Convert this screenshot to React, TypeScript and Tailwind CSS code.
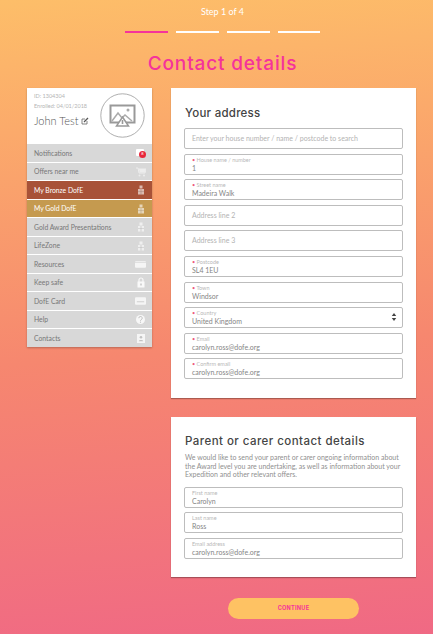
import React from "react";

const body = "font-['Lato','Liberation_Sans',sans-serif]";
const head = "font-['Inter','Liberation_Sans',sans-serif]";

function Glyph({ kind }: { kind: string }) {
  const c = "white";
  const common = { width: 10, height: 10, viewBox: "0 0 10 10" } as const;
  if (kind === "note")
    return (
      <span className="relative block h-[10px] w-[10px]">
        <svg {...common}><rect x="0" y="1" width="8" height="7" rx="1" fill={c} /></svg>
        <span className="absolute left-[3px] top-[2.500px] flex h-[7px] w-[7px] items-center justify-center rounded-full bg-[#e8263a] text-[4px] leading-none text-white">8</span>
      </span>
    );
  if (kind === "cart")
    return (
      <svg {...common} opacity="0.55">
        <path d="M0 1h2l1 5h6l1-4H2.500" fill="none" stroke={c} strokeWidth="1" />
        <path d="M3 2h6.500l-.8 3.500H3.600z" fill={c} />
        <circle cx="3.500" cy="8.500" r="1" fill={c} /><circle cx="8" cy="8.500" r="1" fill={c} />
      </svg>
    );
  if (kind === "award")
    return (
      <svg {...common} opacity="0.6">
        <rect x="3.500" y="0.500" width="3" height="3" fill={c} />
        <rect x="2" y="4" width="6" height="5.500" fill={c} />
        <rect x="4.500" y="4" width="1" height="5.500" fill="#999" opacity="0.5" />
        <rect x="2" y="6" width="6" height="0.8" fill="#999" opacity="0.5" />
      </svg>
    );
  if (kind === "card")
    return (
      <svg width="11" height="10" viewBox="0 0 12 10" opacity="0.75">
        <rect x="0" y="2" width="12" height="7" rx="1" fill={c} />
        <rect x="0" y="3" width="12" height="0.6" fill="#ccc" />
      </svg>
    );
  if (kind === "id")
    return (
      <svg width="11" height="10" viewBox="0 0 12 10" opacity="0.75">
        <rect x="0" y="1" width="12" height="8" rx="1" fill={c} />
        <rect x="2" y="5.500" width="8" height="0.8" fill="#bbb" />
      </svg>
    );
  if (kind === "lock")
    return (
      <svg width="10" height="11" viewBox="0 0 10 11" opacity="0.85">
        <path d="M3 5V3a2 2 0 0 1 4 0v2" fill="none" stroke={c} strokeWidth="1.200" />
        <rect x="1.500" y="4.500" width="7" height="6" fill={c} />
        <rect x="4.500" y="6.500" width="1" height="2" fill="#aaa" />
      </svg>
    );
  if (kind === "help")
    return (
      <svg width="11" height="11" viewBox="0 0 11 11" opacity="0.8">
        <circle cx="5.500" cy="5.500" r="4.500" fill={c} />
        <path d="M3.800 4.200a1.700 1.700 0 1 1 2.400 1.500c-.5.3-.7.5-.7 1.100" fill="none" stroke="#bbb" strokeWidth="1" />
        <circle cx="5.500" cy="8.200" r=".6" fill="#bbb" />
      </svg>
    );
  return (
    <svg width="10" height="11" viewBox="0 0 10 11" opacity="0.75">
      <rect x="1" y="1" width="8" height="9" fill={c} />
      <circle cx="5" cy="4.300" r="1.300" fill="#bbb" />
      <path d="M2.800 8.200c0-1.600 4.400-1.600 4.400 0z" fill="#bbb" />
    </svg>
  );
}

const menu = [
  { t: "Notifications", i: "note", h: "h-[18px]" },
  { t: "Offers near me", i: "cart", h: "h-[17px]" },
  { t: "My Bronze DofE", i: "award", h: "h-[18px]", bg: "bg-[#a85238]" },
  { t: "My Gold DofE", i: "award", h: "h-[17px]", bg: "bg-[#c59a4f]" },
  { t: "Gold Award Presentations", i: "award", h: "h-[18px]" },
  { t: "LifeZone", i: "award", h: "h-[17px]" },
  { t: "Resources", i: "card", h: "h-[18px]" },
  { t: "Keep safe", i: "lock", h: "h-[17px]" },
  { t: "DofE Card", i: "id", h: "h-[18px]" },
  { t: "Help", i: "help", h: "h-[17px]" },
  { t: "Contacts", i: "contact", h: "h-[18px]" },
];

function Field({ label, value, req, ph }: { label?: string; value?: string; req?: boolean; ph?: string }) {
  return (
    <div className={`flex h-[21px] flex-col justify-center rounded-[2px] border border-[#bdbdbd] bg-white px-[7px] ${body}`}>
      {ph ? (
        <span className="text-[7px] leading-none text-[#b3b3b3]">{ph}</span>
      ) : (
        <>
          <span className="text-[5.500px] leading-[7px] text-[#b8b8b8]">
            {req && <span className="text-[#ee5a7c]">• </span>}
            {label}
          </span>
          <span className="text-[7px] leading-[8px] text-[#858585]">{value}</span>
        </>
      )}
    </div>
  );
}

export default function App() {
  return (
    <div className={`h-[634px] w-[433px] overflow-hidden bg-[linear-gradient(176deg,#fdbe69_0%,#fbaa6b_20%,#f6876f_55%,#f06984_100%)] ${body}`}>
      <div className="flex w-[445px] flex-col items-center pt-[5px]">
        <div className="text-[9px] leading-[13px] text-white">Step 1 of 4</div>
        <div className="mt-[13px] flex gap-[8px]">
          <div className="h-[2px] w-[43px] bg-[#f5339b]" />
          <div className="h-[2px] w-[43px] bg-white" />
          <div className="h-[2px] w-[43px] bg-white" />
          <div className="h-[2px] w-[42px] bg-white" />
        </div>
        <h1 className={`mt-[19px] text-[19px] font-medium leading-[24px] tracking-[0.85px] text-[#f5339b] ${head}`}>Contact details</h1>
      </div>

      <div className="mt-[12px] flex items-start gap-[19px] pl-[27px]">
        <aside className="w-[125px] bg-white shadow-[0_1px_2px_rgba(0,0,0,0.25)]">
          <div className="flex h-[56px] justify-between pl-[7px] pr-[7px] pt-[4px]">
            <div>
              <div className="text-[5.500px] leading-[9px] text-[#b5b5b5]">ID: 1304304</div>
              <div className="text-[5.500px] leading-[10px] text-[#b5b5b5]">Enrolled: 04/01/2018</div>
              <div className="mt-[3px] flex items-center gap-[3px] text-[11px] font-light leading-[14px] text-[#555]">
                John Test
                <svg width="8" height="8" viewBox="0 0 8 8"><path d="M1 2h3M1 2v5h5V4" fill="none" stroke="#666" strokeWidth=".8" /><path d="M3 5l4-4" stroke="#555" strokeWidth="1.300" /></svg>
              </div>
            </div>
            <svg width="45" height="45" viewBox="0 0 45 45" className="mt-[1px] shrink-0">
              <circle cx="22.500" cy="22.500" r="21.700" fill="none" stroke="#999" strokeWidth="0.8" />
              <rect x="10.500" y="12.500" width="24" height="17" fill="none" stroke="#999" strokeWidth="2" />
              <path d="M12 28l6-8 4 5 3-3 7 6" fill="none" stroke="#aaa" strokeWidth="1.500" />
              <circle cx="28" cy="17" r="1.500" fill="#aaa" />
              <path d="M22.500 24l6 9h-12z" fill="#fff" stroke="#999" strokeWidth="1.500" />
              <rect x="21.700" y="27" width="1.600" height="4" fill="#999" />
            </svg>
          </div>
          <nav className="flex flex-col gap-[1px]">
            {menu.map((m) => (
              <div key={m.t} className={`flex ${m.h} items-center justify-between pl-[7px] pr-[6px] text-[6.800px] ${m.bg ? `${m.bg} text-white` : "bg-[#d8d8d8] text-[#777]"}`}>
                <span>{m.t}</span>
                <Glyph kind={m.i} />
              </div>
            ))}
          </nav>
        </aside>

        <main className="w-[245px]">
          <section className="h-[310px] bg-white px-[13px] pt-[18px] shadow-[0_1px_1px_rgba(0,0,0,0.3)]">
            <h2 className={`pl-[1px] text-[11.500px] font-medium leading-[14px] tracking-[0.25px] text-[#444] ${head}`}>Your address</h2>
            <div className="mt-[8px] flex flex-col gap-[4.600px]">
              <Field ph="Enter your house number / name / postcode to search" />
              <Field req label="House name / number" value="1" />
              <Field req label="Street name" value="Madeira Walk" />
              <Field ph="Address line 2" />
              <Field ph="Address line 3" />
              <Field req label="Postcode" value="SL4 1EU" />
              <Field req label="Town" value="Windsor" />
              <div className="relative">
                <Field req label="Country" value="United Kingdom" />
                <svg width="6" height="8" viewBox="0 0 6 9" className="absolute right-[6px] top-[6px]"><path d="M3 0l2.500 3.500h-5zM3 9L.5 5.500h5z" fill="#444" /></svg>
              </div>
              <Field req label="Email" value="carolyn.ross@dofe.org" />
              <Field req label="Confirm email" value="carolyn.ross@dofe.org" />
            </div>
          </section>

          <section className="mt-[19px] h-[160px] bg-white px-[13px] pt-[17px] shadow-[0_1px_1px_rgba(0,0,0,0.3)]">
            <h2 className={`pl-[1px] text-[11.500px] font-medium leading-[14px] tracking-[0.45px] text-[#444] ${head}`}>Parent or carer contact details</h2>
            <p className="mt-[5px] pl-[1px] text-[7px] leading-[8.500px] text-[#8f8f8f]">
              We would like to send your parent or carer ongoing information about the Award level you are undertaking, as well as information about your Expedition and other relevant offers.
            </p>
            <div className="mt-[8px] flex flex-col gap-[4.500px]">
              <Field label="First name" value="Carolyn" />
              <Field label="Last name" value="Ross" />
              <Field label="Email address" value="carolyn.ross@dofe.org" />
            </div>
          </section>

          <div className="mt-[21px] flex justify-center">
            <button className={`flex h-[21px] w-[131px] items-center justify-center rounded-full bg-[#fec263] text-[5.500px] font-bold tracking-[0.3px] text-[#f5339b] ${head}`}>CONTINUE</button>
          </div>
        </main>
      </div>
    </div>
  );
}
